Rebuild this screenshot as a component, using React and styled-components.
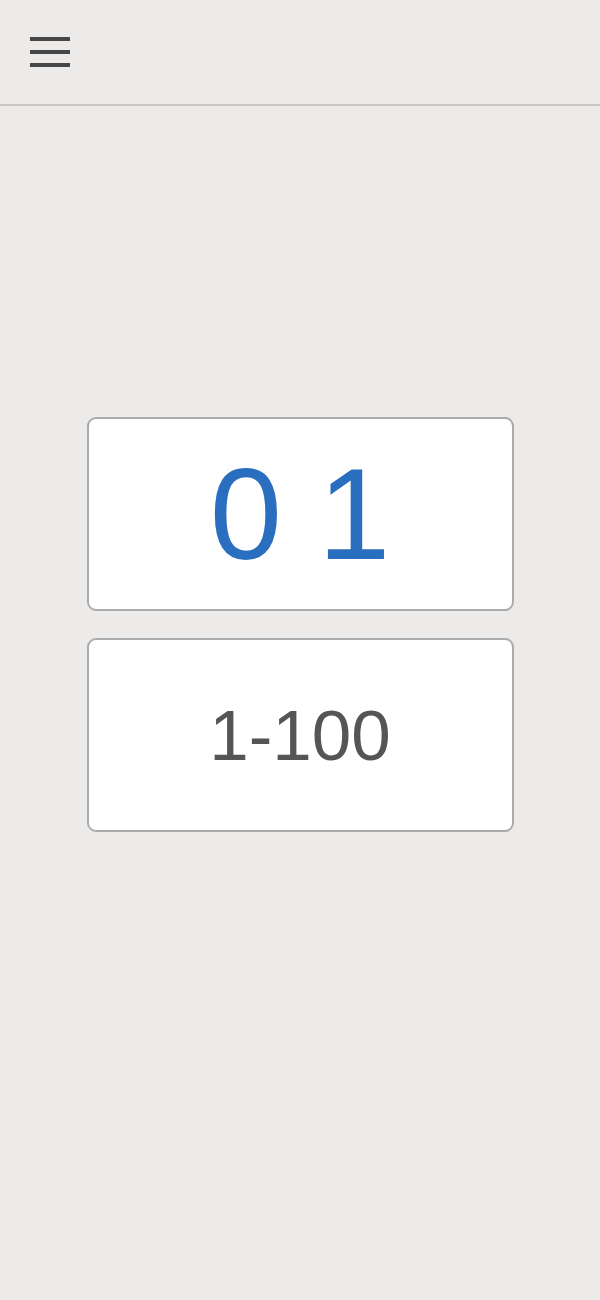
import React from 'react';
import styled, { createGlobalStyle } from 'styled-components';

const GlobalStyle = createGlobalStyle`
  html, body {
    margin: 0;
    padding: 0;
    background: #ecebe9;
    font-family: 'Liberation Sans', Arial, sans-serif;
  }
`;

const App = () => {
  return (
    <Page>
      <GlobalStyle />
      <Header>
        <MenuButton aria-label="menu">
          <MenuLine />
          <MenuLine />
          <MenuLine />
        </MenuButton>
      </Header>
      <Main>
        <Card>
          <Value $accent>0 1</Value>
        </Card>
        <Card>
          <Value>1-100</Value>
        </Card>
      </Main>
    </Page>
  );
};

// Styled components
const Page = styled.div`
  min-height: 1300px;
  background: #ecebe9;
`;

const Header = styled.header`
  height: 106px;
  border-bottom: 2px solid #c9c8c6;
  display: flex;
  align-items: flex-start;
  padding-left: 30px;
  box-sizing: border-box;
`;

const MenuButton = styled.div`
  display: flex;
  flex-direction: column;
  gap: 9px;
  margin-top: 37px;
  width: 40px;
  cursor: pointer;
`;

const MenuLine = styled.span`
  display: block;
  height: 4px;
  background: #474747;
`;

const Main = styled.main`
  display: flex;
  flex-direction: column;
  align-items: center;
  gap: 27px;
  padding-top: 311px;
`;

const Card = styled.div`
  width: 427px;
  height: 194px;
  box-sizing: border-box;
  background: #ffffff;
  border: 2px solid #ababab;
  border-radius: 9px;
  display: flex;
  align-items: center;
  justify-content: center;
`;

const Value = styled.span`
  font-size: ${(p) => (p.$accent ? '130px' : '71px')};
  line-height: 1;
  color: ${(p) => (p.$accent ? '#2a6fbf' : '#555555')};
  white-space: pre;
`;

export default App;
